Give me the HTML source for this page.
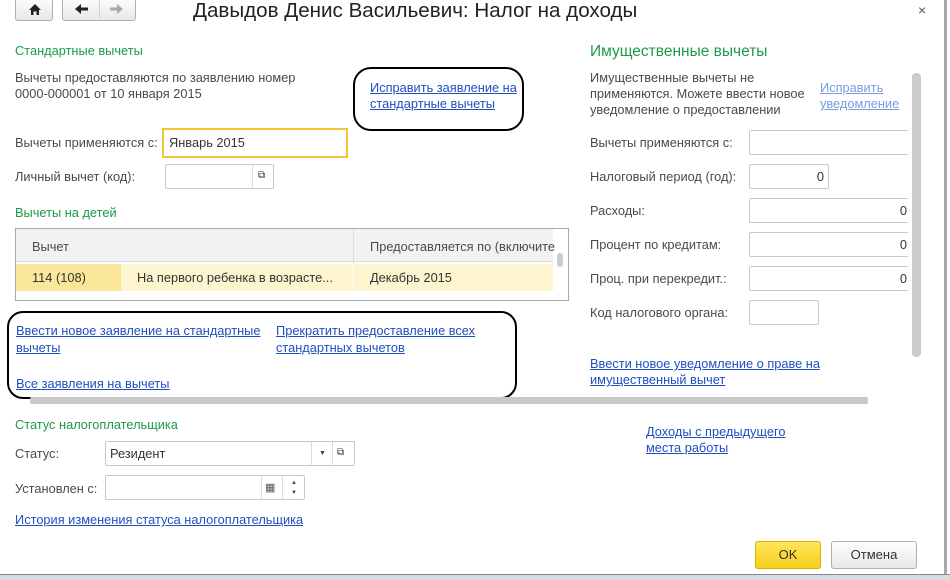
<!DOCTYPE html>
<html><head><meta charset="utf-8"><style>
*{box-sizing:border-box;margin:0;padding:0}
body{width:950px;height:580px;overflow:hidden;background:#fff;font-family:"Liberation Sans",Arial,sans-serif;font-size:12.8px;color:#4a4a4a;position:relative}
.a{position:absolute;white-space:nowrap;line-height:16px}
.g{color:#1b9b48}
.l{color:#1f4fbf;text-decoration:underline}
.inp{position:absolute;border:1px solid #c8c8c8;border-radius:2px;background:#fff}
.btn{position:absolute;border:1px solid #b0b0b0;border-radius:3px;background:linear-gradient(#fdfdfd,#e8e8e8)}
.oval{position:absolute;border:2px solid #000;border-radius:16px}
.num{position:absolute;right:4px;top:0;line-height:24px;color:#333}
</style></head><body>
<div style="position:absolute;left:944px;top:0;width:3px;height:575px;background:#a8a8a8"></div>
<div style="position:absolute;left:0;top:574px;width:950px;height:6px;background:#d8dce2;border-top:1px solid #888"></div>

<div class="btn" style="left:15px;top:-3px;width:38px;height:24px"><svg width="38" height="22" viewBox="0 0 38 22"><path d="M13 12 L19 6 L25 12 H23 V17 H20.5 V13.5 H17.5 V17 H15 V12Z" fill="#222"/></svg></div>
<div class="btn" style="left:62px;top:-3px;width:74px;height:24px"><div style="position:absolute;left:36px;top:2px;width:1px;height:18px;background:#d0d0d0"></div>
<svg width="74" height="22" viewBox="0 0 74 22" style="position:absolute;left:0;top:0"><path d="M12 11 L18 6 V9.5 H25 V12.5 H18 V16Z" fill="#222"/><path d="M60 11 L54 6 V9.5 H47 V12.5 H54 V16Z" fill="#aaa"/></svg></div>
<div class="a" style="left:193px;top:-1px;font-size:20.6px;line-height:24px;color:#222">Давыдов Денис Васильевич: Налог на доходы</div>
<div class="a" style="left:918px;top:2px;font-size:14px;color:#555">×</div>

<div class="a g" style="left:15px;top:43px">Стандартные вычеты</div>
<div class="a" style="left:15px;top:70px">Вычеты предоставляются по заявлению номер</div>
<div class="a" style="left:15px;top:86px">0000-000001 от 10 января 2015</div>
<div class="oval" style="left:353px;top:67px;width:171px;height:64px;border-radius:18px"></div>
<a class="a l" style="left:370px;top:80px">Исправить заявление на</a>
<a class="a l" style="left:370px;top:96px">стандартные вычеты</a>

<div class="a" style="left:15px;top:135px">Вычеты применяются с:</div>
<div class="inp" style="left:162px;top:128px;width:186px;height:30px;border:2px solid #f2c43a;border-radius:0"><span class="a" style="left:5px;top:5px;color:#333">Январь 2015</span></div>
<div class="a" style="left:15px;top:169px">Личный вычет (код):</div>
<div class="inp" style="left:165px;top:164px;width:109px;height:25px"><div style="position:absolute;left:86px;top:0;width:1px;height:23px;background:#ddd"></div><span class="a" style="left:92px;top:3px;font-size:10px;color:#333">⧉</span></div>

<div class="a g" style="left:15px;top:205px">Вычеты на детей</div>
<div style="position:absolute;left:15px;top:228px;width:554px;height:73px;border:1px solid #aaa;overflow:hidden">
 <div style="position:absolute;left:0;top:0;width:537px;height:33px;background:#f2f2f2;border-bottom:1px solid #ddd"></div>
 <div style="position:absolute;left:337px;top:0;width:1px;height:62px;background:#e0e0e0"></div>
 <span class="a" style="left:16px;top:10px">Вычет</span>
 <span class="a" style="left:354px;top:10px">Предоставляется по (включите</span>
 <div style="position:absolute;left:0;top:35px;width:537px;height:27px;background:#fdf5cf"></div>
 <div style="position:absolute;left:0;top:35px;width:105px;height:27px;background:#fbe79a"></div>
 <div style="position:absolute;left:337px;top:35px;width:1px;height:27px;background:#fff"></div>
 <span class="a" style="left:16px;top:41px;color:#333">114 (108)</span>
 <span class="a" style="left:121px;top:41px;color:#333">На первого ребенка в возрасте...</span>
 <span class="a" style="left:354px;top:41px;color:#333">Декабрь 2015</span>
 <div style="position:absolute;left:541px;top:24px;width:6px;height:14px;background:#ccc;border-radius:3px"></div>
</div>
<div class="oval" style="left:7px;top:311px;width:510px;height:88px"></div>
<a class="a l" style="left:16px;top:323px">Ввести новое заявление на стандартные</a>
<a class="a l" style="left:16px;top:340px">вычеты</a>
<a class="a l" style="left:276px;top:323px">Прекратить предоставление всех</a>
<a class="a l" style="left:276px;top:340px">стандартных вычетов</a>
<a class="a l" style="left:16px;top:376px">Все заявления на вычеты</a>
<div style="position:absolute;left:30px;top:397px;width:838px;height:7px;background:#c8c8c8;border-radius:2px"></div>

<div class="a g" style="left:590px;top:42px;font-size:15.5px;line-height:20px">Имущественные вычеты</div>
<div class="a" style="left:590px;top:70px">Имущественные вычеты не</div>
<div class="a" style="left:590px;top:86px">применяются. Можете ввести новое</div>
<div class="a" style="left:590px;top:102px">уведомление о предоставлении</div>
<a class="a l" style="left:820px;top:80px;color:#7a9be0">Исправить</a>
<a class="a l" style="left:820px;top:96px;color:#7a9be0">уведомление</a>
<div class="a" style="left:590px;top:135px">Вычеты применяются с:</div>
<div class="inp" style="left:749px;top:130px;width:170px;height:25px"></div>
<div class="a" style="left:590px;top:169px">Налоговый период (год):</div>
<div class="inp" style="left:749px;top:164px;width:80px;height:25px"><span class="num">0</span></div>
<div class="a" style="left:590px;top:203px">Расходы:</div>
<div class="inp" style="left:749px;top:198px;width:170px;height:25px"><span class="num" style="right:11px">0</span></div>
<div class="a" style="left:590px;top:237px">Процент по кредитам:</div>
<div class="inp" style="left:749px;top:232px;width:170px;height:25px"><span class="num" style="right:11px">0</span></div>
<div class="a" style="left:590px;top:271px">Проц. при перекредит.:</div>
<div class="inp" style="left:749px;top:266px;width:170px;height:25px"><span class="num" style="right:11px">0</span></div>
<div class="a" style="left:590px;top:305px">Код налогового органа:</div>
<div class="inp" style="left:749px;top:300px;width:70px;height:25px"></div>
<a class="a l" style="left:590px;top:356px">Ввести новое уведомление о праве на</a>
<a class="a l" style="left:590px;top:372px">имущественный вычет</a>
<div style="position:absolute;left:908px;top:40px;width:36px;height:360px;background:#fff"></div>
<div style="position:absolute;left:912px;top:73px;width:9px;height:284px;background:#cbcbcb;border-radius:4px"></div>

<div class="a g" style="left:15px;top:417px">Статус налогоплательщика</div>
<div class="a" style="left:15px;top:446px">Статус:</div>
<div class="inp" style="left:105px;top:441px;width:250px;height:25px"><span class="a" style="left:4px;top:4px;color:#333">Резидент</span>
<div style="position:absolute;left:205px;top:0;width:1px;height:23px;background:#ddd"></div><span class="a" style="left:213px;top:4px;font-size:7px;color:#444">▼</span>
<div style="position:absolute;left:226px;top:0;width:1px;height:23px;background:#ddd"></div><span class="a" style="left:231px;top:3px;font-size:10px;color:#333">⧉</span></div>
<div class="a" style="left:15px;top:481px">Установлен с:</div>
<div class="inp" style="left:105px;top:475px;width:200px;height:25px"><div style="position:absolute;left:155px;top:0;width:1px;height:23px;background:#ddd"></div><span class="a" style="left:159px;top:4px;font-size:11px;color:#554">▦</span>
<div style="position:absolute;left:176px;top:0;width:1px;height:23px;background:#ddd"></div><span class="a" style="left:185px;top:-1px;font-size:6px;color:#444">▲</span><span class="a" style="left:185px;top:9px;font-size:6px;color:#444">▼</span></div>
<a class="a l" style="left:15px;top:512px">История изменения статуса налогоплательщика</a>
<a class="a l" style="left:646px;top:424px">Доходы с предыдущего</a>
<a class="a l" style="left:646px;top:440px">места работы</a>

<div style="position:absolute;left:755px;top:541px;width:66px;height:28px;border:1px solid #d9b200;border-radius:3px;background:linear-gradient(#ffe55a,#f7cf1a);text-align:center;line-height:26px;font-size:13px;color:#333">OK</div>
<div class="btn" style="left:831px;top:541px;width:86px;height:28px;text-align:center;line-height:26px;font-size:13px;color:#333">Отмена</div>
</body></html>
